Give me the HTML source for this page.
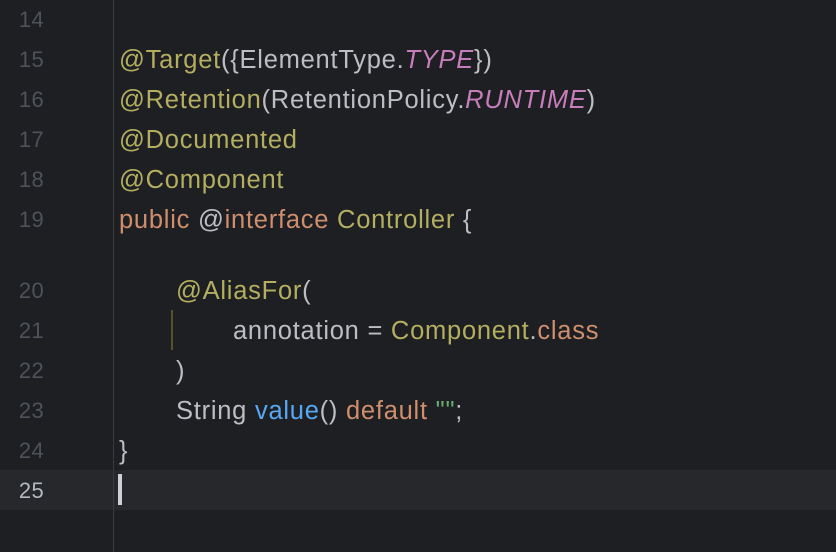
<!DOCTYPE html>
<html><head><style>
body{margin:0;width:836px;height:552px;background:#1e1f22;overflow:hidden;position:relative;font-family:"Liberation Sans",sans-serif;}
.hl{position:absolute;left:0;top:470px;width:836px;height:40px;background:#26282c}
.gut{position:absolute;left:113px;top:0;width:1px;height:552px;background:#393b40}
.n{position:absolute;left:0;width:44px;text-align:right;height:40px;line-height:40px;font-size:22px;color:#4e525a;letter-spacing:0.3px}
.l{position:absolute;height:40px;line-height:40px;font-size:25.5px;letter-spacing:0.75px;color:#bcbec4;white-space:pre}
.a{color:#b3ae60}.k{color:#cf8e6d}.p{color:#c77dbb;font-style:italic}.b{color:#56a8f5}.g{color:#6aab73}
</style></head><body>
<div class="hl"></div><div class="gut"></div>
<div class="n" style="top:0">14</div>
<div class="n" style="top:40px">15</div>
<div class="n" style="top:80px">16</div>
<div class="n" style="top:120px">17</div>
<div class="n" style="top:160px">18</div>
<div class="n" style="top:200px">19</div>
<div class="n" style="top:271px">20</div>
<div class="n" style="top:311px">21</div>
<div class="n" style="top:351px">22</div>
<div class="n" style="top:391px">23</div>
<div class="n" style="top:431px">24</div>
<div class="n" style="top:471px;color:#b4b8bf">25</div>
<div class="l" style="left:119px;top:40px"><span class="a">@Target</span>({ElementType.<span class="p">TYPE</span>})</div>
<div class="l" style="left:119px;top:80px"><span class="a">@Retention</span>(RetentionPolicy.<span class="p">RUNTIME</span>)</div>
<div class="l" style="left:119px;top:120px"><span class="a">@Documented</span></div>
<div class="l" style="left:119px;top:160px"><span class="a">@Component</span></div>
<div class="l" style="left:119px;top:200px"><span class="k">public</span> @<span class="k">interface</span> <span class="a">Controller</span> {</div>
<div class="l" style="left:176px;top:271px"><span class="a">@AliasFor</span>(</div>
<div style="position:absolute;left:171px;top:310px;width:2px;height:40px;background:#5c4f2c"></div>
<div class="l" style="left:233px;top:311px">annotation = <span class="a">Component</span>.<span class="k">class</span></div>
<div class="l" style="left:176px;top:351px">)</div>
<div class="l" style="left:176px;top:391px">String <span class="b">value</span>() <span class="k">default</span> <span class="g">""</span>;</div>
<div class="l" style="left:119px;top:431px">}</div>
<div style="position:absolute;left:118px;top:474px;width:4px;height:31px;background:#ced0d6"></div>
</body></html>
